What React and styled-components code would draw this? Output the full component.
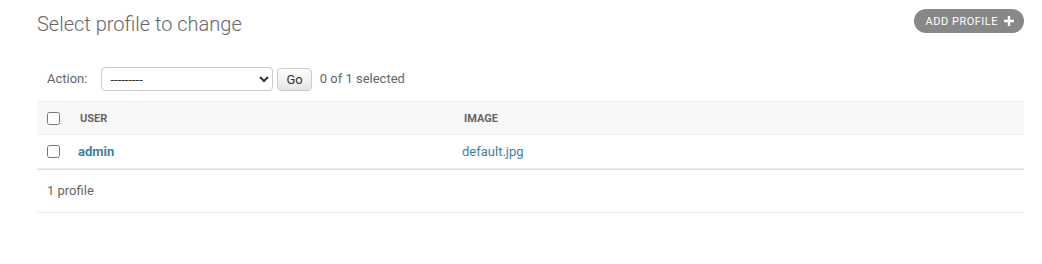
import styled, { createGlobalStyle } from "styled-components";

const Global = createGlobalStyle`
  body {
    margin: 0;
    background: #fff;
    font-family: Roboto, "Liberation Sans", Arial, sans-serif;
    font-size: 14px;
    color: #333;
  }
`

const Content = styled.div`
  padding: 9px 18px 0 37px;
`
const Top = styled.div`
  display: flex;
  justify-content: space-between;
  align-items: flex-start;
  height: 48px;
`
const Title = styled.h1`
  margin: 3px 0 0;
  font-size: 20px;
  line-height: 24px;
  font-weight: 300;
  color: #666;
`
const AddLink = styled.a`
  display: flex;
  align-items: center;
  gap: 6px;
  height: 24px;
  padding: 0 10px 0 12px;
  border-radius: 15px;
  background: #888;
  color: #fff;
  font-size: 11px;
  letter-spacing: 0.5px;
  text-transform: uppercase;
  text-decoration: none;
`
const Actions = styled.div`
  display: flex;
  align-items: center;
  padding: 10px;
  line-height: 24px;
  font-size: 13px;
  color: #666;
`
const Label = styled.label`
  margin-right: 14px;
`
const Select = styled.select`
  width: 172px;
  height: 24px;
  padding: 1px 4px;
  border: 1px solid #ccc;
  border-radius: 4px;
  background: #fff;
  font-family: inherit;
  font-size: 13px;
  color: #333;
`
const GoButton = styled.button`
  margin-left: 4px;
  height: 23px;
  padding: 0 8px;
  border: 1px solid #ccc;
  border-radius: 4px;
  background: #fff;
  box-shadow: 0 -15px 20px -10px rgba(0, 0, 0, 0.15) inset;
  font-family: inherit;
  font-size: 13px;
  color: #333;
`
const Counter = styled.span`
  margin-left: 8px;
`
const Row = styled.div`
  display: grid;
  grid-template-columns: 33px 384px 1fr;
  align-items: center;
  height: ${p => (p.head ? "32px" : "33px")};
  border-top: ${p => (p.head ? "1px solid #eee" : "none")};
  border-bottom: 1px solid #eee;
  background: ${p => (p.head ? "#f8f8f8" : "#fff")};
`
const Cell = styled.div`
  display: flex;
  align-items: center;
  padding-left: ${p => (p.head ? "10px" : "8px")};
`
const CheckCell = styled.div`
  display: flex;
  align-items: center;
  padding-left: 10px;
`
const HeadText = styled.span`
  font-size: 11px;
  font-weight: 700;
  text-transform: uppercase;
  color: #666;
`
const Box = styled.input.attrs({ type: "checkbox" })`
  margin: 0;
  width: 13px;
  height: 13px;
`
const Link = styled.a`
  font-size: 13px;
  line-height: 16px;
  color: #447e9b;
  font-weight: ${p => (p.bold ? 700 : 400)};
  text-decoration: none;
`
const Paginator = styled.p`
  margin: 0;
  padding: 10px;
  font-size: 13px;
  line-height: 22px;
  border-top: 1px solid #ddd;
  border-bottom: 1px solid #eee;
  color: #666;
`

const Plus = () => (
  <svg width="10" height="10" viewBox="0 0 10 10">
    <path d="M3.8 0h2.4v3.8H10v2.4H6.2V10H3.8V6.2H0V3.8h3.8z" fill="#fff" />
  </svg>
)

export default function App() {
  return (
    <Content>
      <Global />
      <Top>
        <Title>Select profile to change</Title>
        <AddLink href="#">Add profile <Plus /></AddLink>
      </Top>
      <Actions>
        <Label>Action:</Label>
        <Select defaultValue="">
          <option value="">---------</option>
          <option value="delete">Delete selected profiles</option>
        </Select>
        <GoButton>Go</GoButton>
        <Counter>0 of 1 selected</Counter>
      </Actions>
      <Row head>
        <CheckCell><Box /></CheckCell>
        <Cell head><HeadText>User</HeadText></Cell>
        <Cell head><HeadText>Image</HeadText></Cell>
      </Row>
      <Row>
        <CheckCell><Box /></CheckCell>
        <Cell><Link bold href="#">admin</Link></Cell>
        <Cell><Link href="#">default.jpg</Link></Cell>
      </Row>
      <Paginator>1 profile</Paginator>
    </Content>
  )
}
